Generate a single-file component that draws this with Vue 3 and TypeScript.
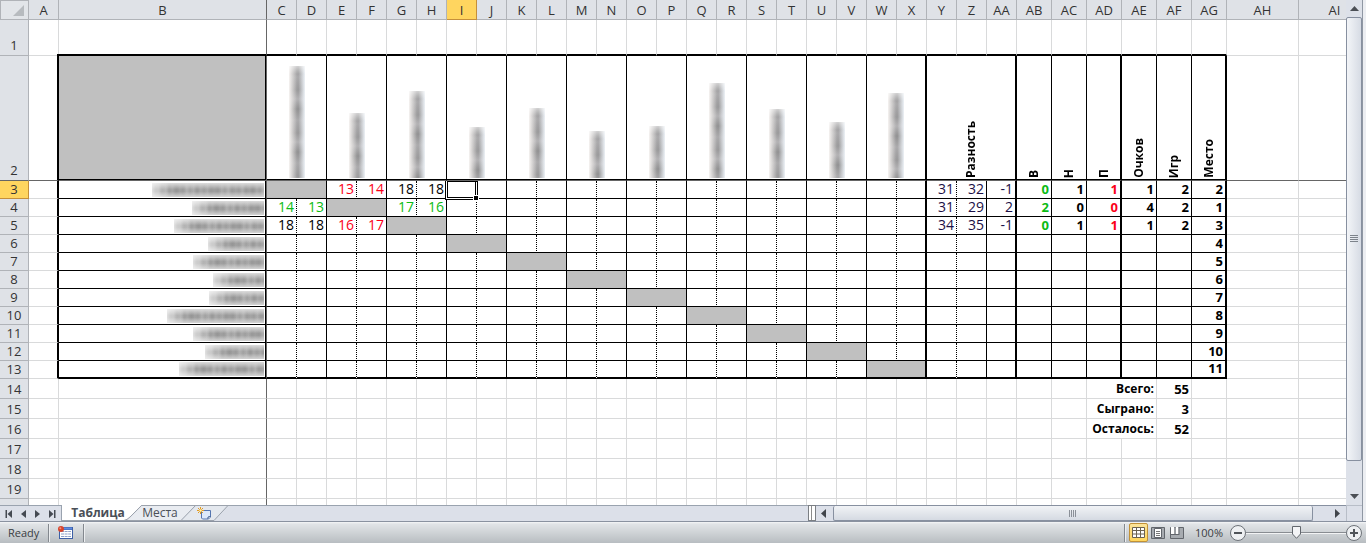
<script setup lang="ts">
import { ref } from 'vue'

interface Cell {
  key: string
  text?: string
  cls: string[]
  span?: number
  smudge?: number
  vertical?: boolean
  picked?: boolean
}
interface Row {
  no: number
  height: number
  cells: Cell[]
}
interface Column {
  name: string
  width: number
}

const letters = 'ABCDEFGHIJKLMNOPQRSTUVWXYZ'.split('')
const names = [...letters, 'AA', 'AB', 'AC', 'AD', 'AE', 'AF', 'AG', 'AH', 'AI']
const widthOf = (i: number): number => {
  if (i === 1) return 208
  if (i >= 33) return 72
  if (i >= 27) return 35
  return 30
}
const columns: Column[] = names.map((name, i) => ({ name, width: widthOf(i) }))

const nameWidths = [112, 72, 90, 56, 71, 51, 55, 97, 71, 59, 85]
const headHeights = [112, 65, 87, 51, 70, 47, 52, 95, 69, 56, 85]
const heads: Record<string, string> = {
  Y: 'Разность', AB: 'В', AC: 'Н', AD: 'П', AE: 'Очков', AF: 'Игр', AG: 'Место',
}
const scores: Record<number, Record<string, string>> = {
  3: { E: '13', F: '14', G: '18', H: '18', Y: '31', Z: '32', AA: '-1', AB: '0', AC: '1', AD: '1', AE: '1', AF: '2', AG: '2' },
  4: { C: '14', D: '13', G: '17', H: '16', Y: '31', Z: '29', AA: '2', AB: '2', AC: '0', AD: '0', AE: '4', AF: '2', AG: '1' },
  5: { C: '18', D: '18', E: '16', F: '17', Y: '34', Z: '35', AA: '-1', AB: '0', AC: '1', AD: '1', AE: '1', AF: '2', AG: '3' },
}
const colours: Record<string, string> = {
  '3E': 'red', '3F': 'red', '5E': 'red', '5F': 'red',
  '4C': 'green', '4D': 'green', '4G': 'green', '4H': 'green',
}
const totals: Record<number, [string, string]> = {
  14: ['Всего:', '55'], 15: ['Сыграно:', '3'], 16: ['Осталось:', '52'],
}
const heavy = new Set(['A', 'X', 'AA', 'AD', 'AG'])
const lastNumbered = 19

function heightOf(no: number): number {
  if (no === 1) return 36
  if (no === 2) return 125
  return no <= 13 ? 18 : 20
}

function buildRow(no: number): Row {
  const cells: Cell[] = []
  for (let i = 0; i < names.length; i++) {
    const name = names[i]
    const cls: string[] = []
    const cell: Cell = { key: name + no, cls }
    const inside = i >= 1 && i <= 32
    const ranged = no >= 2 && no <= 13
    if (name === 'B') cls.push('freeze-x')
    if (no === 1) {
      if (inside) cls.push('thick-b')
      if (i === 0) cls.push('joint')
    }
    if (ranged) {
      if (inside) cls.push('dark')
      if (heavy.has(name)) cls.push('thick-r')
      if (name === 'B') cls.push('edge')
      if (no === 2) cls.push('freeze-y')
      if (no === 13 && inside) cls.push('thick-b')
    }
    if (no === 2) {
      if (inside) cls.push('title')
      if (name === 'B') cls.push('gray')
      if (i >= 2 && i <= 23) {
        cell.span = 2
        cell.smudge = headHeights[(i - 2) / 2]
        cell.vertical = true
        if (i === 22) cls.push('thick-r')
        i++
      } else if (name === 'Y') {
        cell.span = 3
        cell.text = heads.Y
        cell.vertical = true
        cls.push('thick-r')
        i += 2
      } else if (heads[name]) {
        cell.text = heads[name]
        cell.vertical = true
      }
    } else if (ranged) {
      const k = no - 3
      if (name === 'B') cell.smudge = nameWidths[k]
      if (i === 2 + k * 2) {
        cell.span = 2
        cls.push('gray')
        if (i === 22) cls.push('thick-r')
        i++
      } else {
        if ((i >= 2 && i <= 23 && i % 2 === 0) || name === 'Y') cls.push('dots')
        cell.text = scores[no]?.[name] ?? (name === 'AG' ? String(k + 1) : undefined)
        cls.push(i >= 27 ? 'bold' : 'score')
        if (i >= 24 && i <= 26) cls.push('navy')
        if (name === 'AB') cls.push('green')
        if (name === 'AD') cls.push('red')
        const c = colours[no + name]
        if (c) cls.push(c)
        if (no === 3 && name === 'I') cell.picked = true
      }
    } else if (totals[no]) {
      if (name === 'AD') {
        cell.span = 2
        cell.text = totals[no][0]
        cls.push('bold', 'label')
        i++
      } else if (name === 'AF') {
        cell.text = totals[no][1]
        cls.push('bold')
      }
    }
    cells.push(cell)
  }
  return { no, height: heightOf(no), cells }
}

const rows: Row[] = Array.from({ length: 20 }, (_, i) => buildRow(i + 1))
const places = ['4', '5', '6', '7', '8', '9', '10', '11']
rows.forEach((r) => {
  if (r.no >= 6 && r.no <= 13) {
    const last = r.cells.find((c) => c.key === 'AG' + r.no)
    if (last) last.text = places[r.no - 6]
  }
})

const zoom = ref(50)
const smudgeSize = (c: Cell) =>
  c.vertical ? { height: c.smudge + 'px' } : { width: c.smudge + 'px' }
</script>

<template>
  <div class="app">
    <div class="work">
      <div class="sheet">
        <table class="grid">
          <colgroup>
            <col class="col-no" />
            <col v-for="c in columns" :key="c.name" :style="{ width: c.width + 'px' }" />
          </colgroup>
          <thead>
            <tr>
              <th class="all"><svg width="11" height="11" viewBox="0 0 11 11"><path d="M11 0V11H0Z" fill="#b7bbbf" /></svg></th>
              <th v-for="c in columns" :key="c.name" scope="col"
                :class="{ active: c.name === 'I', 'freeze-x': c.name === 'B' }">{{ c.name }}</th>
            </tr>
          </thead>
          <tbody>
            <tr v-for="r in rows" :key="r.no" :style="{ height: r.height + 'px' }">
              <th scope="row" :class="{ active: r.no === 3, 'freeze-y': r.no === 2, tall: r.no < 3 }">{{ r.no <= lastNumbered ? r.no : '' }}</th>
              <td v-for="c in r.cells" :key="c.key" :colspan="c.span" :class="c.cls">
                <span v-if="c.smudge" class="smudge" :class="{ upright: c.vertical }" :style="smudgeSize(c)"></span>
                <span v-else-if="c.vertical" class="turned">{{ c.text }}</span>
                <span v-else-if="c.picked" class="cursor"><i></i></span>
                <template v-else>{{ c.text }}</template>
              </td>
            </tr>
          </tbody>
        </table>
      </div>
      <div class="vbar">
        <button class="arrow" aria-label="Scroll up"><svg width="9" height="5" viewBox="0 0 9 5"><path d="M4.500 0L9 5H0Z" fill="#4b4f55" /></svg></button>
        <div class="vtrack"><div class="vthumb"><svg width="8" height="8" viewBox="0 0 8 8"><path d="M0 .5H8M0 2.500H8M0 4.500H8M0 6.500H8" stroke="#7d838b" /></svg></div></div>
        <button class="arrow" aria-label="Scroll down"><svg width="9" height="5" viewBox="0 0 9 5"><path d="M0 0H9L4.500 5Z" fill="#4b4f55" /></svg></button>
      </div>
      <div class="rim"></div>
    </div>

    <div class="strip">
      <div class="navs">
        <button aria-label="First sheet"><svg width="7" height="8" viewBox="0 0 7 8"><path d="M.5 0H2V8H.5ZM7 0V8L2.500 4Z" fill="#454a52" /></svg></button>
        <button aria-label="Previous sheet"><svg width="5" height="8" viewBox="0 0 5 8"><path d="M5 0V8L0 4Z" fill="#454a52" /></svg></button>
        <button aria-label="Next sheet"><svg width="5" height="8" viewBox="0 0 5 8"><path d="M0 0V8L5 4Z" fill="#454a52" /></svg></button>
        <button aria-label="Last sheet"><svg width="7" height="8" viewBox="0 0 7 8"><path d="M5 0H6.500V8H5ZM0 0V8L4.500 4Z" fill="#454a52" /></svg></button>
      </div>
      <div class="tabs">
        <svg class="shapes" width="170" height="16" viewBox="0 0 170 16">
          <path d="M66 15L80 1H133L119 15Z" fill="#e9ecf1" />
          <path d="M120 15L134 1H165L152 15Z" fill="#e4e8ee" />
          <path d="M0 15.500H152L166 .5M79 .5H170" fill="none" stroke="#9ca3ad" />
          <path d="M0 0H79.500L68 12Q65 15 62 15H0Z" fill="#fff" />
          <path d="M79.500 .5L68 12Q65 15 62 15.500M133.500 .5L119 15.500" fill="none" stroke="#9ca3ad" />
        </svg>
        <button class="tab on">Таблица</button>
        <button class="tab">Места</button>
        <button class="tab add" aria-label="Insert sheet">
          <svg width="15" height="13" viewBox="0 0 15 13">
            <path d="M4.500 3.500H13.500V10L11.500 12H5.500L4.500 11Z" fill="#dce8fa" stroke="#5475b0" />
            <path d="M13.500 9.500L11 10V12" fill="#fff" stroke="#38598f" />
            <path d="M3.500 0V7M0 3.500H7M1 1L6 6M6 1L1 6" stroke="#e19a25" />
            <circle cx="3.500" cy="3.500" r="1.200" fill="#fff3b0" />
          </svg>
        </button>
      </div>
      <div class="gap"></div>
      <div class="split"></div>
      <div class="hbar">
        <button class="harrow" aria-label="Scroll left"><svg width="5" height="9" viewBox="0 0 5 9"><path d="M5 0V9L0 4.500Z" fill="#41454b" /></svg></button>
        <div class="htrack"><div class="hthumb"><svg width="8" height="7" viewBox="0 0 8 7"><path d="M.5 0V7M2.500 0V7M4.500 0V7M6.500 0V7" stroke="#8b9098" /></svg></div></div>
        <button class="harrow right" aria-label="Scroll right"><svg width="5" height="9" viewBox="0 0 5 9"><path d="M0 0V9L5 4.500Z" fill="#41454b" /></svg></button>
      </div>
      <div class="nook"></div>
      <div class="rim"></div>
    </div>

    <footer class="status">
      <span class="ready">Ready</span>
      <span class="sep"></span>
      <button class="macro" aria-label="Record macro">
        <svg width="15" height="13" viewBox="0 0 15 13">
          <path d="M1 1H15V13H1Z" fill="#3d5fa6" />
          <path d="M2 4H14V12H2Z" fill="#fff" />
          <path d="M2 1.500H14V3.500H2Z" fill="#5f8be0" />
          <path d="M3 5.500H13M3 8H13M3 10.500H13" stroke="#8d9fc8" stroke-dasharray="3 .6" />
          <circle cx="3" cy="3" r="3" fill="#d8442c" />
          <circle cx="2.300" cy="2.300" r="1" fill="#f0907c" />
        </svg>
      </button>
      <span class="sep"></span>
      <span class="gap"></span>
      <span class="sep"></span>
      <div class="views">
        <button class="view on" aria-label="Normal">
          <svg width="13" height="11" viewBox="0 0 13 11"><path d="M.5 .5H12.500V10.500H.5Z" fill="#fff" stroke="#6b6250" /><path d="M0 3.500H13M0 7H13M4.500 0V11M8.500 0V11" stroke="#6b6250" /></svg>
        </button>
        <button class="view" aria-label="Page layout">
          <svg width="14" height="12" viewBox="0 0 14 12"><path d="M.5 .5H13.500V11.500H.5Z" fill="#a7abb0" stroke="#62666c" /><path d="M3.500 1.500H10.500V10.500H3.500Z" fill="#fff" stroke="#62666c" /><path d="M5 4.500H9M5 6.500H9M5 8.500H9" stroke="#777" /></svg>
        </button>
        <button class="view" aria-label="Page break preview">
          <svg width="14" height="12" viewBox="0 0 14 12"><path d="M.5 .5H13.500V11.500H.5Z" fill="#a7abb0" stroke="#62666c" /><path d="M1 0H4.500V7H1ZM5.500 0H8.500V7H5.500Z" fill="#fff" /><path d="M5 0V7.500M0 7.500H9M9 0V8" stroke="#62666c" /></svg>
        </button>
      </div>
      <button class="percent">100%</button>
      <button class="round" aria-label="Zoom out"><svg width="16" height="16" viewBox="0 0 16 16"><circle cx="8" cy="8" r="7.500" fill="#eef0f2" stroke="#6d7278" /><path d="M4 8H12" stroke="#505459" stroke-width="2" /></svg></button>
      <input v-model="zoom" class="slider" type="range" min="0" max="100" aria-label="Zoom" />
      <button class="round" aria-label="Zoom in"><svg width="16" height="16" viewBox="0 0 16 16"><circle cx="8" cy="8" r="7.500" fill="#eef0f2" stroke="#6d7278" /><path d="M4 8H12M8 4V12" stroke="#505459" stroke-width="2" /></svg></button>
    </footer>
  </div>
</template>

<style>
body {
  margin: 0;
  overflow: hidden;
}
</style>

<style scoped>
.app {
  display: flex;
  flex-direction: column;
  height: 100vh;
  background: #fff;
  font-family: 'Open Sans', 'Noto Sans', sans-serif;
  font-size: 13px;
  color: #000;
}
button {
  margin: 0;
  padding: 0;
  border: 0;
  background: none;
  font: inherit;
  color: inherit;
}
svg {
  display: block;
  flex: none;
}
.work {
  flex: 1;
  min-height: 0;
  display: flex;
}
.sheet {
  flex: 1;
  min-width: 0;
  overflow: hidden;
}
.grid {
  width: 0;
  table-layout: fixed;
  border-collapse: separate;
  border-spacing: 0;
}
.col-no {
  width: 29px;
}
th,
td {
  box-sizing: border-box;
  padding: 0 0 2px;
  border: 0 solid #d9dadb;
  border-right-width: 1px;
  border-bottom-width: 1px;
  line-height: 14px;
  vertical-align: bottom;
  white-space: nowrap;
}
td {
  position: relative;
  padding-right: 2px;
  text-align: right;
}
th {
  background: #dfe2e7;
  border-color: #b0b3b8;
  color: #333;
  font-weight: 400;
  text-align: center;
}
th.tall {
  padding-bottom: 3px;
}
thead th {
  height: 20px;
  padding: 2px 0 0;
  line-height: 17px;
}
thead .all {
  padding: 0 4px 3px 0;
  background: #e2e5e9;
  box-shadow: inset 1px 1px #b0b3b8;
}
.all svg {
  margin-left: auto;
}
th.active {
  background: #ffd55f;
  border-color: #c58f3a;
}
.freeze-x {
  border-right-color: #666;
}
td.dark {
  border-color: #000;
}
td.dark.freeze-x {
  border-right-color: #666;
}
td.thick-r {
  border-right: 2px solid #000;
}
td.thick-b {
  border-bottom: 2px solid #000;
}
td.dots {
  border-right-style: dotted;
}
th.freeze-y,
td.freeze-y {
  border-bottom-color: #666;
}
td.edge {
  padding-bottom: 0;
  box-shadow: inset -1px 0 #000;
}
td.title {
  padding: 0 0 2px;
  text-align: center;
  box-shadow: inset 0 -1px #000;
}
td.title.edge {
  box-shadow: inset -1px -1px #000;
}
td.joint::after {
  content: '';
  position: absolute;
  right: -1px;
  bottom: -1px;
  width: 2px;
  height: 2px;
  background: #000;
}
.gray {
  background: #c0c0c0;
}
.score {
  font-size: 14px;
}
.bold {
  font-weight: 700;
}
.label {
  font-size: 12px;
}
.navy {
  color: #1c1046;
}
.red {
  color: #fb0018;
}
.green {
  color: #0cbb14;
}
.turned {
  display: inline-block;
  vertical-align: bottom;
  writing-mode: vertical-rl;
  transform: rotate(180deg);
  line-height: 18px;
  font-size: 12px;
  font-weight: 700;
}
.smudge {
  display: block;
  height: 14px;
  margin: 0 0 1px auto;
  background:
    linear-gradient(#dcdcdc, #dcdcdc00 45%, #dcdcdc00 60%, #d4d4d4),
    repeating-linear-gradient(90deg, #8880 0, #8886 9px, #8882 15px, #8888 26px, #8880 37px),
    repeating-linear-gradient(90deg, #b4b4b4 0, #a2a2a2 3px, #b8b8b8 7px);
  mask-image: linear-gradient(90deg, #0006, #000 18px);
}
.smudge.upright {
  width: 16px;
  margin: 0 auto;
  background:
    linear-gradient(90deg, #f6f3f1, #d8d5d400 50%, #d8d8da00 60%, #edf2f7),
    repeating-linear-gradient(#7778 0, #7772 11px, #7776 24px, #7770 33px, #7778 43px),
    #b4b3b5;
  mask-image: linear-gradient(#0006, #000 8px);
}
.cursor {
  position: absolute;
  z-index: 2;
  top: 0;
  bottom: -2px;
  left: -2px;
  right: -2px;
  border: 3px double #000;
  border-top: 1px solid #000;
  background: #fff;
}
.cursor i {
  position: absolute;
  right: -4px;
  bottom: -4px;
  width: 4px;
  height: 4px;
  background: #000;
  border: 1px solid #fff;
}
.vbar {
  width: 16px;
  display: flex;
  flex-direction: column;
  background: #dde1e9;
}
.arrow {
  height: 17px;
  display: flex;
  align-items: center;
  justify-content: center;
}
.vtrack {
  flex: 1;
  display: flex;
  flex-direction: column;
  padding-bottom: 27px;
}
.vthumb {
  flex: 1;
  display: flex;
  align-items: center;
  justify-content: center;
  border: 1px solid #8790a0;
  border-radius: 2px;
  background: linear-gradient(90deg, #f3f5f8, #d6dbe4);
}
.rim {
  width: 3px;
  border-left: 1px solid #8f97a3;
  background: #eceef2;
}
.strip {
  height: 16px;
  display: flex;
  background: #dce0e9;
}
.navs {
  width: 62px;
  box-sizing: border-box;
  padding: 0 5px;
  display: flex;
  align-items: center;
  justify-content: space-between;
  border-top: 1px solid #9aa3af;
  border-right: 1px solid #9aa3af;
}
.tabs {
  position: relative;
  width: 170px;
  display: flex;
}
.shapes {
  position: absolute;
  inset: 0;
}
.tab {
  position: relative;
  width: 52px;
  line-height: 16px;
  font-size: 12px;
  color: #4a4f57;
}
.tab.on {
  width: 72px;
  font-weight: 700;
}
.tab.add {
  display: flex;
  align-items: center;
  justify-content: center;
  width: 36px;
}
.gap {
  flex: 1;
}
.strip .gap {
  border-top: 1px solid #9aa3af;
}
.split {
  width: 8px;
  box-sizing: border-box;
  border: 1px solid #7b7f84;
  background: linear-gradient(90deg, #fff 2px, #8b8b8b 2px, #8b8b8b 3px, #fff 3px);
}
.hbar {
  width: 530px;
  display: flex;
  border-top: 1px solid #8790a0;
  box-sizing: border-box;
}
.harrow {
  width: 17px;
  padding-right: 2px;
  box-sizing: border-box;
  display: flex;
  align-items: center;
  justify-content: center;
}
.harrow.right {
  padding-right: 0;
}
.htrack {
  flex: 1;
  display: flex;
  padding-right: 16px;
}
.hthumb {
  flex: 1;
  display: flex;
  align-items: center;
  justify-content: center;
  border: 1px solid #8790a0;
  border-top: 0;
  border-radius: 2px;
  background: linear-gradient(#f1f3f6, #d5dae2);
}
.nook {
  width: 16px;
  box-sizing: border-box;
  border-top: 1px solid #b8bec8;
  border-left: 1px solid #b8bec8;
}
.status {
  height: 22px;
  box-sizing: border-box;
  padding: 0 4px 0 8px;
  display: flex;
  align-items: center;
  border-top: 1px solid #8a92a0;
  background: linear-gradient(#f5f6f7 0, #e1e4e7 2px, #cfd3d6 50%, #b8bdc1);
  font-size: 11px;
  color: #3a3d42;
}
.ready {
  width: 40px;
}
.sep {
  width: 1px;
  height: 18px;
  background: #83888e;
  border-right: 1px solid #eceef0;
}
.macro {
  width: 33px;
  padding-right: 3px;
  box-sizing: border-box;
  display: flex;
  justify-content: center;
}
.views {
  display: flex;
  align-items: center;
  padding: 0 2px 0 3px;
}
.view {
  width: 19px;
  height: 19px;
  box-sizing: border-box;
  display: flex;
  align-items: center;
  justify-content: center;
}
.view.on {
  border: 1px solid #c29136;
  border-radius: 2px;
  background: linear-gradient(#fce49a, #ffd65c);
}
.percent {
  width: 42px;
  text-align: center;
}
.round {
  width: 16px;
  height: 16px;
}
.slider {
  appearance: none;
  width: 100px;
  height: 16px;
  margin: 0;
  background: linear-gradient(#0000 7px, #888c91 7px, #888c91 8px, #f2f3f4 8px, #f2f3f4 9px, #0000 9px);
}
.slider::-webkit-slider-thumb {
  appearance: none;
  width: 9px;
  height: 13px;
  background: url("data:image/svg+xml,%3Csvg xmlns='http://www.w3.org/2000/svg' width='9' height='13'%3E%3Cpath d='M.5 .5H8.500V8L4.500 12.300L.5 8Z' fill='%23f3f4f6' stroke='%2362676d'/%3E%3C/svg%3E") no-repeat;
}
</style>
